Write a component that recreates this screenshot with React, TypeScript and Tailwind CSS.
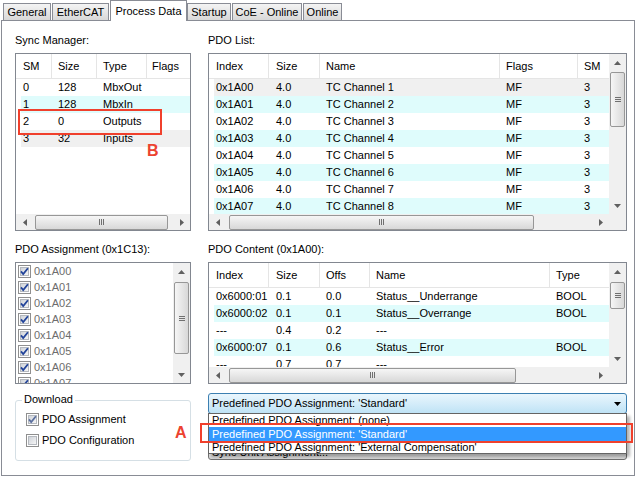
import { FC, ReactNode } from "react";

type Col = { label: string; head: string; cell: string };
type Row = { cells: string[]; bg: string };

const Arrow: FC<{ dir: "up" | "down" | "left" | "right"; color?: string }> = ({
  dir,
  color = "#606060",
}) => {
  const vertical = dir === "up" || dir === "down";
  const pts = {
    up: "0,4 7,4 3.5,0",
    down: "0,0 7,0 3.5,4",
    left: "4,0 4,7 0,3.5",
    right: "0,0 0,7 4,3.5",
  }[dir];
  return (
    <svg
      width={vertical ? 7 : 4}
      height={vertical ? 4 : 7}
      viewBox={vertical ? "0 0 7 4" : "0 0 4 7"}
    >
      <polygon points={pts} fill={color} />
    </svg>
  );
};

const VScroll: FC<{ before: string; thumb: string }> = ({ before, thumb }) => (
  <div className="flex w-[17px] shrink-0 flex-col bg-[#f0f0f0]">
    <div className="flex h-[17px] shrink-0 items-center justify-center">
      <Arrow dir="up" />
    </div>
    <div className="flex min-h-0 flex-1 flex-col">
      <div className={"shrink-0 " + before} />
      <div
        className={
          "mx-auto flex w-[15px] shrink-0 items-center justify-center rounded-[2px] border border-[#979797] bg-linear-to-r from-[#f6f6f6] to-[#d8d8d8] " +
          thumb
        }
      >
        <div className="flex flex-col gap-[1px]">
          <div className="h-px w-[6px] bg-[#707070]" />
          <div className="h-px w-[6px] bg-[#707070]" />
          <div className="h-px w-[6px] bg-[#707070]" />
        </div>
      </div>
    </div>
    <div className="flex h-[17px] shrink-0 items-center justify-center">
      <Arrow dir="down" />
    </div>
  </div>
);

const HScroll: FC<{ before: string; thumb: string }> = ({ before, thumb }) => (
  <div className="flex min-w-0 flex-1 bg-[#f0f0f0]">
    <div className="flex w-[17px] shrink-0 items-center justify-center">
      <Arrow dir="left" />
    </div>
    <div className="flex min-w-0 flex-1 items-center">
      <div className={"shrink-0 " + before} />
      <div
        className={
          "flex h-[15px] shrink-0 items-center justify-center rounded-[2px] border border-[#979797] bg-linear-to-b from-[#f6f6f6] to-[#d8d8d8] " +
          thumb
        }
      >
        <div className="flex gap-[1px]">
          <div className="h-[6px] w-px bg-[#707070]" />
          <div className="h-[6px] w-px bg-[#707070]" />
          <div className="h-[6px] w-px bg-[#707070]" />
        </div>
      </div>
    </div>
    <div className="flex w-[17px] shrink-0 items-center justify-center">
      <Arrow dir="right" />
    </div>
  </div>
);

const ListView: FC<{
  cols: Col[];
  rows: Row[];
  className: string;
  vscroll?: ReactNode;
  hscroll: ReactNode;
  children?: ReactNode;
}> = ({ cols, rows, className, vscroll, hscroll, children }) => (
  <div
    className={
      "relative flex flex-col border border-[#828790] bg-white " + className
    }
  >
    <div className="flex min-h-0 flex-1">
      <div className="flex min-w-0 flex-1 flex-col overflow-hidden">
        <div className="flex h-[25px] shrink-0 border-b border-[#e5e5e5]">
          {cols.map((c, i) => (
            <div
              key={c.label}
              className={
                "flex items-center whitespace-nowrap " +
                (i < cols.length - 1 ? "border-r border-[#e5e5e5] " : "") +
                c.head
              }
            >
              {c.label}
            </div>
          ))}
        </div>
        {rows.map((r, ri) => (
          <div
            key={ri}
            className={"ml-[5px] flex h-[17px] shrink-0 items-center " + r.bg}
          >
            {cols.map((c, i) => (
              <div
                key={i}
                className={"overflow-hidden whitespace-nowrap " + c.cell}
              >
                {r.cells[i]}
              </div>
            ))}
          </div>
        ))}
      </div>
      {vscroll}
    </div>
    <div className="flex h-[16px] shrink-0">
      {hscroll}
      {vscroll && <div className="w-[17px] shrink-0 bg-[#f0f0f0]" />}
    </div>
    {children}
  </div>
);

const CheckBox: FC<{ checked?: boolean; mark?: string }> = ({
  checked,
  mark = "#23449a",
}) => (
  <svg width="13" height="13" viewBox="0 0 13 13" className="shrink-0">
    <defs>
      <linearGradient id="cbfill" x1="0" y1="0" x2="1" y2="1">
        <stop offset="0" stopColor="#cdd1d7" />
        <stop offset="1" stopColor="#f8f8f8" />
      </linearGradient>
    </defs>
    <rect x="0.5" y="0.5" width="12" height="12" fill="#fff" stroke="#8f8f8f" />
    <rect
      x="2.5"
      y="2.5"
      width="8"
      height="8"
      fill="url(#cbfill)"
      stroke="#b5b9bf"
    />
    {checked && (
      <path
        d="M3 6.4 L5.2 9 L9.9 3.2"
        fill="none"
        stroke={mark}
        strokeWidth="1.8"
      />
    )}
  </svg>
);

const Tab: FC<{ label: string; className: string; active?: boolean }> = ({
  label,
  className,
  active,
}) =>
  active ? (
    <div
      className={
        "flex h-[21px] items-center justify-center border border-b-0 border-[#898c95] bg-white " +
        className
      }
    >
      {label}
    </div>
  ) : (
    <div
      className={
        "mb-[1px] flex h-[17px] items-center justify-center border border-b-0 border-[#898c95] bg-linear-to-b from-[#f4f4f4] to-[#d8d8d8] pt-[1px] " +
        className
      }
    >
      {label}
    </div>
  );

const syncCols: Col[] = [
  { label: "SM", head: "w-[36px] pl-[7px]", cell: "w-[31px] pl-[2px]" },
  { label: "Size", head: "w-[45px] pl-[6px]", cell: "w-[45px] pl-[6px]" },
  { label: "Type", head: "w-[50px] pl-[6px]", cell: "w-[50px] pl-[6px]" },
  { label: "Flags", head: "flex-1 pl-[5px]", cell: "flex-1 pl-[5px]" },
];

const syncRows: Row[] = [
  { cells: ["0", "128", "MbxOut", ""], bg: "bg-white" },
  { cells: ["1", "128", "MbxIn", ""], bg: "bg-[#dffcfc]" },
  { cells: ["2", "0", "Outputs", ""], bg: "bg-white" },
  { cells: ["3", "32", "Inputs", ""], bg: "bg-[#f0f0f0]" },
];

const pdoCols: Col[] = [
  { label: "Index", head: "w-[60px] pl-[7px]", cell: "w-[55px] pl-[2px]" },
  { label: "Size", head: "w-[51px] pl-[7px]", cell: "w-[51px] pl-[7px]" },
  { label: "Name", head: "w-[180px] pl-[6px]", cell: "w-[180px] pl-[6px]" },
  { label: "Flags", head: "w-[78px] pl-[6px]", cell: "w-[78px] pl-[6px]" },
  { label: "SM", head: "flex-1 pl-[6px]", cell: "flex-1 pl-[6px]" },
];

const pdoRows: Row[] = [0, 1, 2, 3, 4, 5, 6, 7].map((i) => ({
  cells: ["0x1A0" + i, "4.0", "TC Channel " + (i + 1), "MF", "3"],
  bg: i === 0 ? "bg-[#f0f0f0]" : i % 2 === 1 ? "bg-[#dffcfc]" : "bg-white",
}));

const contentCols: Col[] = [
  { label: "Index", head: "w-[60px] pl-[7px]", cell: "w-[55px] pl-[2px]" },
  { label: "Size", head: "w-[51px] pl-[7px]", cell: "w-[51px] pl-[7px]" },
  { label: "Offs", head: "w-[50px] pl-[6px]", cell: "w-[50px] pl-[6px]" },
  { label: "Name", head: "w-[180px] pl-[6px]", cell: "w-[180px] pl-[6px]" },
  { label: "Type", head: "flex-1 pl-[6px]", cell: "flex-1 pl-[6px]" },
];

const contentRows: Row[] = [
  { cells: ["0x6000:01", "0.1", "0.0", "Status__Underrange", "BOOL"], bg: "bg-white" },
  { cells: ["0x6000:02", "0.1", "0.1", "Status__Overrange", "BOOL"], bg: "bg-[#dffcfc]" },
  { cells: ["---", "0.4", "0.2", "---", ""], bg: "bg-white" },
  { cells: ["0x6000:07", "0.1", "0.6", "Status__Error", "BOOL"], bg: "bg-[#dffcfc]" },
  { cells: ["---", "0.7", "0.7", "---", ""], bg: "bg-white" },
];

const assignItems = [
  "0x1A00",
  "0x1A01",
  "0x1A02",
  "0x1A03",
  "0x1A04",
  "0x1A05",
  "0x1A06",
  "0x1A07",
];

const App = () => {
  return (
    <div className="h-[477px] w-[641px] overflow-hidden bg-white pl-[1px] font-['Liberation_Sans',Arial,sans-serif] text-[11px] leading-[13px] text-black">
      <div className="relative z-10 flex h-[21px] items-end pl-[2px]">
        <Tab label="General" className="w-[48px]" />
        <Tab label="EtherCAT" className="ml-[1px] w-[57px]" />
        <Tab label="Process Data" className="ml-[1px] w-[77px]" active />
        <Tab label="Startup" className="w-[44px]" />
        <Tab label="CoE - Online" className="ml-[1px] w-[70px]" />
        <Tab label="Online" className="ml-[1px] w-[39px]" />
      </div>
      <div className="-mt-[1px] flex h-[456px] w-[634px] gap-[17px] border border-[#898c95] bg-white pl-[13px] pt-[13px]">
        {/* left column */}
        <div className="flex w-[176px] flex-col">
          <div className="h-[19px]">Sync Manager:</div>
          <ListView
            cols={syncCols}
            rows={syncRows}
            className="h-[178px]"
            hscroll={<HScroll before="w-[2px]" thumb="w-[133px]" />}
          >
            <div className="absolute left-[2px] top-[55px] h-[26px] w-[144px] border-2 border-[#f0402c]" />
            <div className="absolute left-[131px] top-[89px] text-[16px] leading-[16px] font-bold text-[#ec4330]">
              B
            </div>
          </ListView>

          <div className="mt-[12px] h-[19px]">PDO Assignment (0x1C13):</div>
          <div className="flex h-[122px] border border-[#828790] bg-white">
            <div className="flex min-w-0 flex-1 flex-col overflow-hidden">
              {assignItems.map((it) => (
                <div
                  key={it}
                  className="flex h-[16px] shrink-0 items-center pl-[2px]"
                >
                  <CheckBox checked />
                  <span className="ml-[3px] text-[#6d6d6d]">{it}</span>
                </div>
              ))}
            </div>
            <VScroll before="h-[2px]" thumb="h-[72px]" />
          </div>

          <div className="relative mt-[16px] flex h-[61px] flex-col gap-[8px] rounded-[3px] border border-[#d5dfe5] pl-[10px] pt-[12px]">
            <div className="absolute -top-[8px] left-[6px] bg-white px-[2px]">
              Download
            </div>
            <div className="flex h-[13px] items-center gap-[3px]">
              <CheckBox checked mark="#5b6f9e" />
              <span>PDO Assignment</span>
            </div>
            <div className="flex h-[13px] items-center gap-[3px]">
              <CheckBox />
              <span>PDO Configuration</span>
            </div>
          </div>
        </div>

        {/* right column */}
        <div className="flex w-[419px] flex-col">
          <div className="h-[19px]">PDO List:</div>
          <ListView
            cols={pdoCols}
            rows={pdoRows}
            className="h-[178px]"
            vscroll={<VScroll before="h-[1px]" thumb="h-[55px]" />}
            hscroll={<HScroll before="w-[3px]" thumb="w-[305px]" />}
          />

          <div className="mt-[12px] h-[19px]">PDO Content (0x1A00):</div>
          <ListView
            cols={contentCols}
            rows={contentRows}
            className="h-[122px]"
            vscroll={<VScroll before="h-[2px]" thumb="h-[27px]" />}
            hscroll={<HScroll before="w-[3px]" thumb="w-[287px]" />}
          />

          <div className="relative mt-[9px]">
            <div className="flex h-[21px] items-center justify-between rounded-[3px] border border-[#3c7fb1] bg-linear-to-b from-[#eaf6fd] to-[#bfe3f6] pl-[3px] pr-[5px]">
              <span>Predefined PDO Assignment: 'Standard'</span>
              <Arrow dir="down" color="#000" />
            </div>
            <div className="absolute left-0 right-0 top-[20px] z-10 flex flex-col border border-[#646464] bg-white shadow-[3px_3px_3px_rgba(0,0,0,0.3)]">
              <div className="flex h-[13px] items-center pl-[3px]">
                Predefined PDO Assignment: (none)
              </div>
              <div className="flex h-[14px] items-center bg-[#3399ff] pl-[3px] text-white">
                Predefined PDO Assignment: 'Standard'
              </div>
              <div className="flex h-[12px] items-center pl-[3px]">
                Predefined PDO Assignment: 'External Compensation'
              </div>
            </div>
            <div className="absolute -left-[8px] top-[30px] z-20 h-[20px] w-[433px] border-2 border-[#f0402c]" />
            <div className="absolute -left-[33px] top-[32px] text-[16px] leading-[16px] font-bold text-[#ec4330]">
              A
            </div>
          </div>

          <div className="mt-[24px] h-[22px] rounded-[3px] border border-[#707070] bg-linear-to-b from-[#f2f2f2] to-[#d9d9d9] pl-[3px] pt-[7px]">
            Sync Unit Assignment...
          </div>
        </div>
      </div>
    </div>
  );
};

export default App;
